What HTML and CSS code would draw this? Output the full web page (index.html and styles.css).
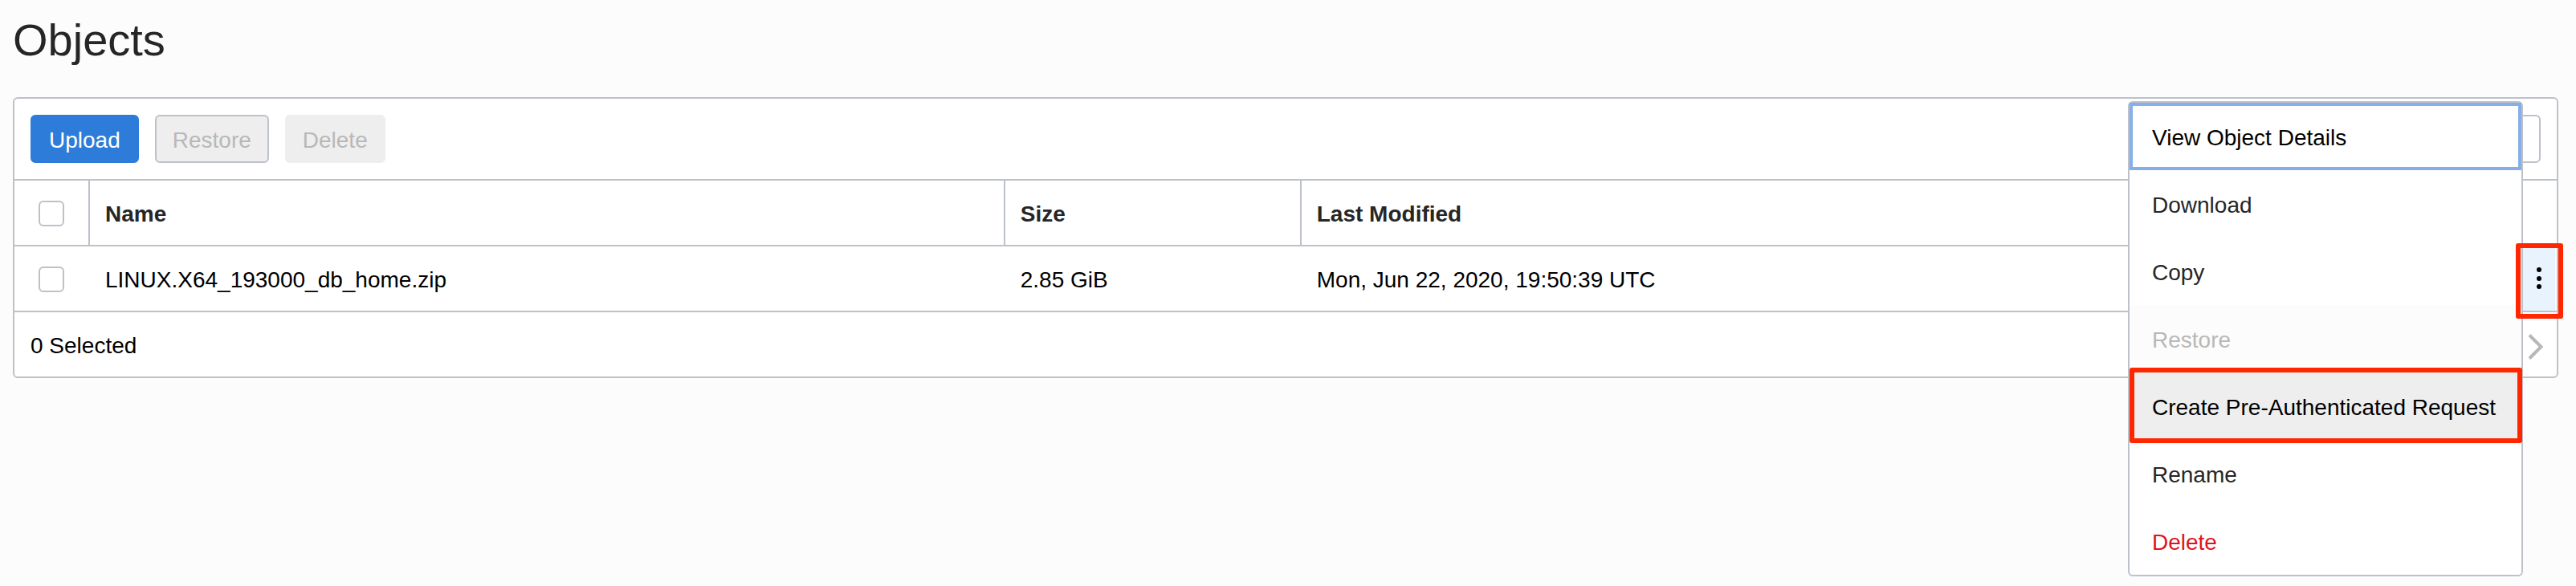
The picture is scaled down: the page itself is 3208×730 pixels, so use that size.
FILE: index.html
```html
<!DOCTYPE html>
<html lang="en">
<head>
  <meta charset="utf-8">
  <title>Objects</title>
  <link rel="stylesheet" href="styles.css">
</head>
<body>
  <main class="page">
    <h1 class="title">Objects</h1>
    <section class="panel">
      <div class="toolbar">
        <button class="btn btn-primary" type="button">Upload</button>
        <button class="btn btn-outline" type="button" disabled>Restore</button>
        <button class="btn btn-plain" type="button" disabled>Delete</button>
        <input class="search" type="search" aria-label="Search objects">
      </div>
      <table class="objects">
        <colgroup>
          <col class="col-check">
          <col class="col-name">
          <col class="col-size">
          <col>
          <col class="col-actions">
        </colgroup>
        <thead>
          <tr>
            <th class="check-cell" scope="col"><input class="check" type="checkbox" aria-label="Select all"></th>
            <th scope="col">Name</th>
            <th scope="col">Size</th>
            <th scope="col">Last Modified</th>
            <th class="action-cell"></th>
          </tr>
        </thead>
        <tbody>
          <tr>
            <td class="check-cell"><input class="check" type="checkbox" aria-label="Select LINUX.X64_193000_db_home.zip"></td>
            <td>LINUX.X64_193000_db_home.zip</td>
            <td>2.85 GiB</td>
            <td>Mon, Jun 22, 2020, 19:50:39 UTC</td>
            <td class="action-cell">
              <div class="actions">
                <button class="kebab" type="button" aria-label="Actions" aria-expanded="true">
                  <svg width="8" height="30" viewBox="0 0 8 30" aria-hidden="true">
                    <circle cx="4" cy="4" r="3"/>
                    <circle cx="4" cy="15" r="3"/>
                    <circle cx="4" cy="25" r="3"/>
                  </svg>
                </button>
                <div class="menu" role="menu">
                  <button class="item focused" type="button" role="menuitem">View Object Details</button>
                  <button class="item" type="button" role="menuitem">Download</button>
                  <button class="item" type="button" role="menuitem">Copy</button>
                  <button class="item" type="button" role="menuitem" disabled>Restore</button>
                  <button class="item highlighted" type="button" role="menuitem">Create Pre-Authenticated Request</button>
                  <button class="item" type="button" role="menuitem">Rename</button>
                  <button class="item danger" type="button" role="menuitem">Delete</button>
                </div>
              </div>
            </td>
          </tr>
        </tbody>
      </table>
      <div class="footer">
        <span class="count">0 Selected</span>
        <button class="next" type="button" aria-label="Next page" disabled>
          <svg width="20" height="32" viewBox="0 0 20 32" aria-hidden="true">
            <path d="M2 1.5 16.5 16 2 30.5"/>
          </svg>
        </button>
      </div>
    </section>
  </main>
</body>
</html>
```
FILE: styles.css
```css
* {
  box-sizing: border-box;
}

body {
  margin: 0;
  background: #fcfcfc;
  color: #000;
  font: 28px/32px "Liberation Sans", Arial, sans-serif;
}

button,
input {
  margin: 0;
  font: inherit;
}

.page {
  min-height: 100vh;
  padding: 18px 22px 0 16px;
}

.title {
  margin: 0 0 39px;
  color: #262626;
  font-size: 56px;
  font-weight: 400;
  line-height: 64px;
}

.panel {
  border: 2px solid #bdc1c9;
  border-radius: 6px;
  background: #fff;
}

.toolbar {
  display: flex;
  gap: 20px;
  padding: 20px;
  border-bottom: 2px solid #bdc1c9;
}

.btn {
  height: 60px;
  padding: 3px 20px 0;
  border: 2px solid #eee;
  border-radius: 6px;
  background: #eee;
  color: #b8b8b8;
}

.btn-primary {
  padding: 3px 21px 0;
  border-color: #2e7cd9;
  background: #2e7cd9;
  color: #fff;
}

.btn-outline {
  border-color: #bdc1c9;
}

.search {
  width: 400px;
  height: 60px;
  margin-left: auto;
  padding: 0 16px;
  border: 2px solid #bdc1c9;
  border-radius: 6px;
  background: #fff;
}

.objects {
  width: 100%;
  border-collapse: separate;
  border-spacing: 0;
  table-layout: fixed;
}

.col-check {
  width: 94px;
}

.col-name {
  width: 36%;
}

.col-size {
  width: 369px;
}

.col-actions {
  width: 42px;
}

.objects th,
.objects td {
  height: 82px;
  padding: 3px 19px 0;
  border-bottom: 2px solid #bdc1c9;
  text-align: left;
  vertical-align: middle;
}

.objects th {
  border-right: 2px solid #bdc1c9;
  color: #262626;
  font-weight: 700;
}

.objects .check-cell {
  padding: 2px 0 0 30px;
}

.objects .action-cell {
  padding: 0;
  border-right: 0;
}

.check {
  display: block;
  width: 32px;
  height: 32px;
  border: 2px solid #bdc1c9;
  border-radius: 6px;
  background: #fff;
  appearance: none;
}

.actions {
  position: relative;
  width: 40px;
}

.kebab {
  display: flex;
  align-items: center;
  justify-content: center;
  width: 100%;
  height: 80px;
  padding: 0;
  border: 0;
  background: #e8f3fd;
}

/* Callout frames drawn over the menu and its trigger */
.kebab::after,
.highlighted::after {
  position: absolute;
  z-index: 2;
  border: 6px solid #ff2600;
  border-radius: 3px;
  content: "";
}

.kebab::after {
  inset: -4px -10px -10px -9px;
}

.highlighted::after {
  inset: -10px -5px -8px -4px;
}

.menu {
  position: absolute;
  z-index: 1;
  top: -181px;
  right: 100%;
  width: 492px;
  border: 2px solid #bdc1c9;
  border-radius: 6px;
  background: #fff;
}

.item {
  position: relative;
  display: block;
  width: 100%;
  height: 84px;
  padding: 3px 24px 0;
  border: 4px solid transparent;
  background: none;
  color: #262626;
  text-align: left;
  white-space: nowrap;
}

.item:disabled {
  background: #fcfcfc;
  color: #b8b8b8;
}

.focused {
  border-color: #86aee8;
  color: #000;
}

.highlighted {
  background: #eee;
  color: #000;
}

.danger {
  color: #e0141c;
}

.footer {
  display: flex;
  align-items: center;
  justify-content: space-between;
  height: 80px;
  padding: 3px 16px 0 20px;
}

.next {
  display: flex;
  padding: 3px 0 0;
  border: 0;
  background: none;
}

.next path {
  fill: none;
  stroke: #b8b8b8;
  stroke-width: 4;
}
```
